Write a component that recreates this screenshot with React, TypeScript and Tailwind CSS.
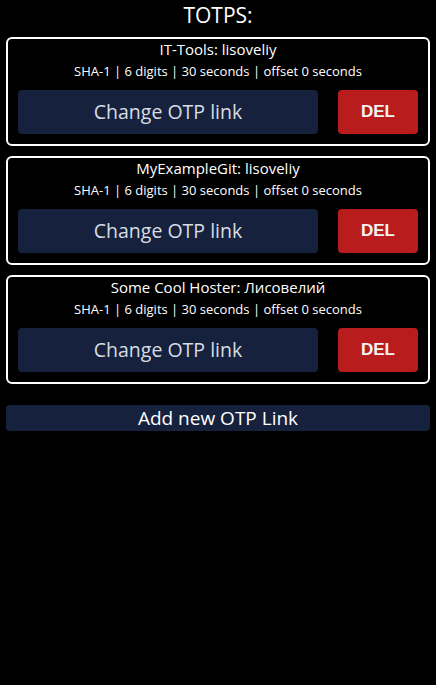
const otps = [
  { name: 'IT-Tools: lisoveliy' },
  { name: 'MyExampleGit: lisoveliy' },
  { name: 'Some Cool Hoster: Лисовелий' },
]

export default function App() {
  return (
    <div className="min-h-[685px] bg-black px-[6px] text-white font-['Open_Sans',sans-serif]">
      <h1 className="pt-[1px] text-center text-[21px] leading-[28px]">TOTPS:</h1>
      <div className="mt-[8px] flex flex-col gap-[10.5px]">
        {otps.map((otp) => (
          <OtpCard key={otp.name} name={otp.name} />
        ))}
      </div>
      <button className="mt-[21px] h-[26px] w-full overflow-hidden rounded-[4px] bg-[#16213d] text-[19px] leading-[26px] text-white">
        Add new OTP Link
      </button>
    </div>
  )
}

function OtpCard({ name }: { name: string }) {
  return (
    <div className="rounded-[6px] border-2 border-white px-[10px] pb-[10px] pt-[0px]">
      <p className="text-center text-[15px] leading-[21px]">{name}</p>
      <p className="text-center text-[13px] leading-[22px]">
        SHA-1 | 6 digits | 30 seconds | offset 0 seconds
      </p>
      <div className="mt-[8px] flex gap-[20px]">
        <button className="h-[43.5px] flex-1 rounded-[4px] bg-[#16213d] text-[19.5px] text-[#d9dde3]">
          Change OTP link
        </button>
        <button className="h-[43.5px] w-[80px] rounded-[4px] bg-[#b91c1c] font-['Liberation_Sans',sans-serif] text-[17px] font-bold text-[#f3f3f3]">
          DEL
        </button>
      </div>
    </div>
  )
}
